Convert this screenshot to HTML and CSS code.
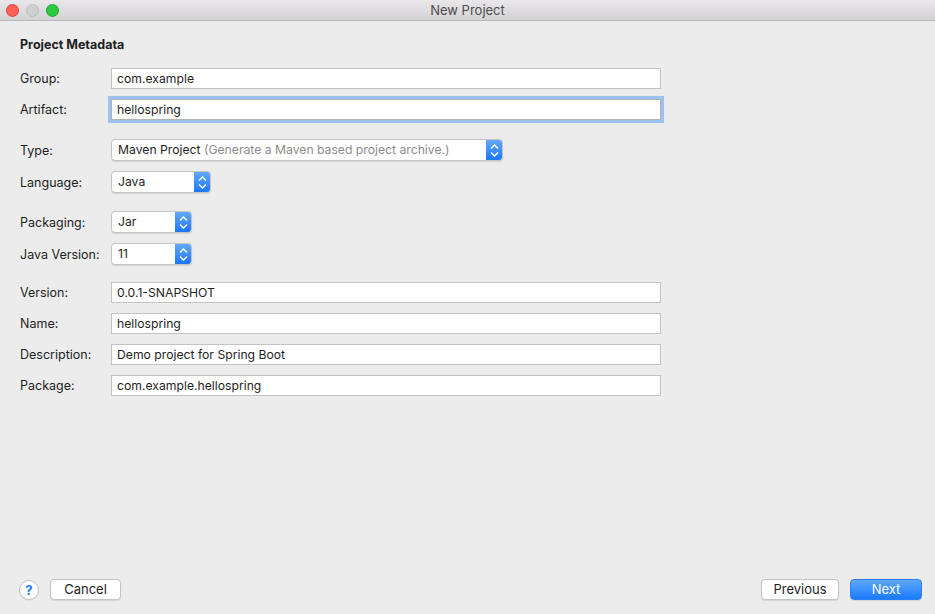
FILE: index.html
```html
<!DOCTYPE html>
<html>
<head>
<meta charset="utf-8">
<link rel="stylesheet" href="styles.css">
</head>
<body>
<div class="window">
  <div class="titlebar">
    <div class="lights">
      <span class="light red"></span>
      <span class="light gray"></span>
      <span class="light green"></span>
    </div>
    <div class="title">New Project</div>
  </div>
  <div class="content">
    <div class="heading">Project Metadata</div>
    <div class="group">
      <label class="label">Group:</label>
      <div class="field">com.example</div>
      <label class="label">Artifact:</label>
      <div class="field focused">hellospring</div>
    </div>
    <div class="group selects">
      <label class="label">Type:</label>
      <div class="select w-type"><span class="val">Maven Project <span class="hint">(Generate a Maven based project archive.)</span></span><span class="stepper"><svg width="17" height="21" viewBox="0 0 17 21"><path d="M5 8.5 L8.5 5 L12 8.5 M5 12.5 L8.5 16 L12 12.5" fill="none" stroke="#fff" stroke-width="1.4"/></svg></span></div>
      <label class="label">Language:</label>
      <div class="select w-lang"><span class="val">Java</span><span class="stepper"><svg width="17" height="21" viewBox="0 0 17 21"><path d="M5 8.5 L8.5 5 L12 8.5 M5 12.5 L8.5 16 L12 12.5" fill="none" stroke="#fff" stroke-width="1.4"/></svg></span></div>
    </div>
    <div class="group selects">
      <label class="label">Packaging:</label>
      <div class="select w-small"><span class="val">Jar</span><span class="stepper"><svg width="17" height="21" viewBox="0 0 17 21"><path d="M5 8.5 L8.5 5 L12 8.5 M5 12.5 L8.5 16 L12 12.5" fill="none" stroke="#fff" stroke-width="1.4"/></svg></span></div>
      <label class="label">Java Version:</label>
      <div class="select w-small"><span class="val">11</span><span class="stepper"><svg width="17" height="21" viewBox="0 0 17 21"><path d="M5 8.5 L8.5 5 L12 8.5 M5 12.5 L8.5 16 L12 12.5" fill="none" stroke="#fff" stroke-width="1.4"/></svg></span></div>
    </div>
    <div class="group">
      <label class="label">Version:</label>
      <div class="field">0.0.1-SNAPSHOT</div>
      <label class="label">Name:</label>
      <div class="field">hellospring</div>
      <label class="label">Description:</label>
      <div class="field">Demo project for Spring Boot</div>
      <label class="label">Package:</label>
      <div class="field">com.example.hellospring</div>
    </div>
  </div>
  <div class="footer">
    <div class="left">
      <span class="help">?</span>
      <button class="btn">Cancel</button>
    </div>
    <div class="right">
      <button class="btn prev">Previous</button>
      <button class="btn primary">Next</button>
    </div>
  </div>
</div>
</body>
</html>
```
FILE: styles.css
```css
* { box-sizing: border-box; }
html, body { margin: 0; padding: 0; }
body {
  width: 935px;
  height: 614px;
  background: #ececec;
  font-family: "Inter", "Liberation Sans", sans-serif;
  font-size: 13px;
  color: #1e1e1e;
  overflow: hidden;
}
.window {
  display: flex;
  flex-direction: column;
  height: 614px;
}
.titlebar {
  height: 21px;
  flex: none;
  background: linear-gradient(#e9e7e9, #d4d2d4);
  border-bottom: 1px solid #b9b9b9;
  display: flex;
  align-items: center;
  position: relative;
}
.lights {
  display: flex;
  gap: 7px;
  padding-left: 6px;
}
.light {
  width: 13px;
  height: 13px;
  border-radius: 50%;
  display: block;
}
.light.red { background: #fc5f57; border: 0.5px solid #e0443e; }
.light.gray { background: #cfcfcf; border: 0.5px solid #bdbdbd; }
.light.green { background: #2ac940; border: 0.5px solid #1fa831; }
.title {
  position: absolute;
  left: 0;
  right: 0;
  top: 0;
  height: 20px;
  line-height: 20px;
  text-align: center;
  color: #4c4c4c;
  font-size: 13px;
}
.content {
  flex: 1;
  padding: 16px 0 0 20px;
}
.heading {
  font-weight: 700;
  line-height: 16px;
  height: 16px;
  margin-bottom: 15px;
  font-size: 12.5px;
}
.group {
  display: grid;
  grid-template-columns: 91px 550px;
  row-gap: 10px;
  align-items: center;
  margin-bottom: 18px;
}
.group.selects {
  padding-top: 1px;
  margin-bottom: 17px;
}
.label {
  line-height: 21px;
  font-size: 12.5px;
}
.field {
  height: 21px;
  background: #fff;
  border: 1px solid #c3c3c3;
  padding: 0 5px;
  line-height: 19px;
  font-size: 12.2px;
  white-space: nowrap;
}
.field.focused {
  box-shadow: 0 0 0 3px #9cc2f0;
  border-color: #b4b4b4;
}
.select {
  height: 22px;
  display: flex;
  background: #fff;
  border: 1px solid #c6c6c6;
  border-radius: 4px;
  box-shadow: 0 0.5px 1px rgba(0,0,0,0.12);
  overflow: hidden;
}
.select .val {
  flex: 1;
  padding: 0 6px;
  line-height: 20px;
  font-size: 12.2px;
  white-space: nowrap;
}
.hint { color: #8c8c8c; }
.stepper {
  width: 17px;
  flex: none;
  margin: -1px -1px -1px 0;
  background: linear-gradient(#66acfc, #1a74fb);
  border-radius: 0 4px 4px 0;
  display: flex;
  align-items: center;
  justify-content: center;
}
.stepper svg { display: block; }
.w-type { width: 392px; }
.w-lang { width: 100px; }
.w-small { width: 81px; }
.footer {
  flex: none;
  display: flex;
  justify-content: space-between;
  align-items: center;
  padding: 0 13px 14px 19px;
}
.left, .right {
  display: flex;
  align-items: center;
}
.help {
  width: 20px;
  height: 20px;
  border-radius: 50%;
  background: #fff;
  border: 1px solid #c4c4c4;
  box-shadow: 0 0.5px 1px rgba(0,0,0,0.1);
  color: #1a7bfb;
  font-weight: 700;
  font-size: 13px;
  line-height: 18px;
  text-align: center;
  margin-right: 11px;
}
.btn {
  font-family: inherit;
  font-size: 13px;
  height: 21px;
  padding: 0;
  background: #fff;
  border: 1px solid #c4c4c4;
  border-radius: 4px;
  color: #1e1e1e;
  box-shadow: 0 0.5px 1px rgba(0,0,0,0.1);
  width: 71px;
  line-height: 19px;
}
.btn.prev { width: 78px; margin-right: 11px; }
.btn.primary {
  width: 72px;
  background: linear-gradient(#5ea8fd, #1a7afb);
  border-color: #2a7ff5;
  color: #fff;
}
```
